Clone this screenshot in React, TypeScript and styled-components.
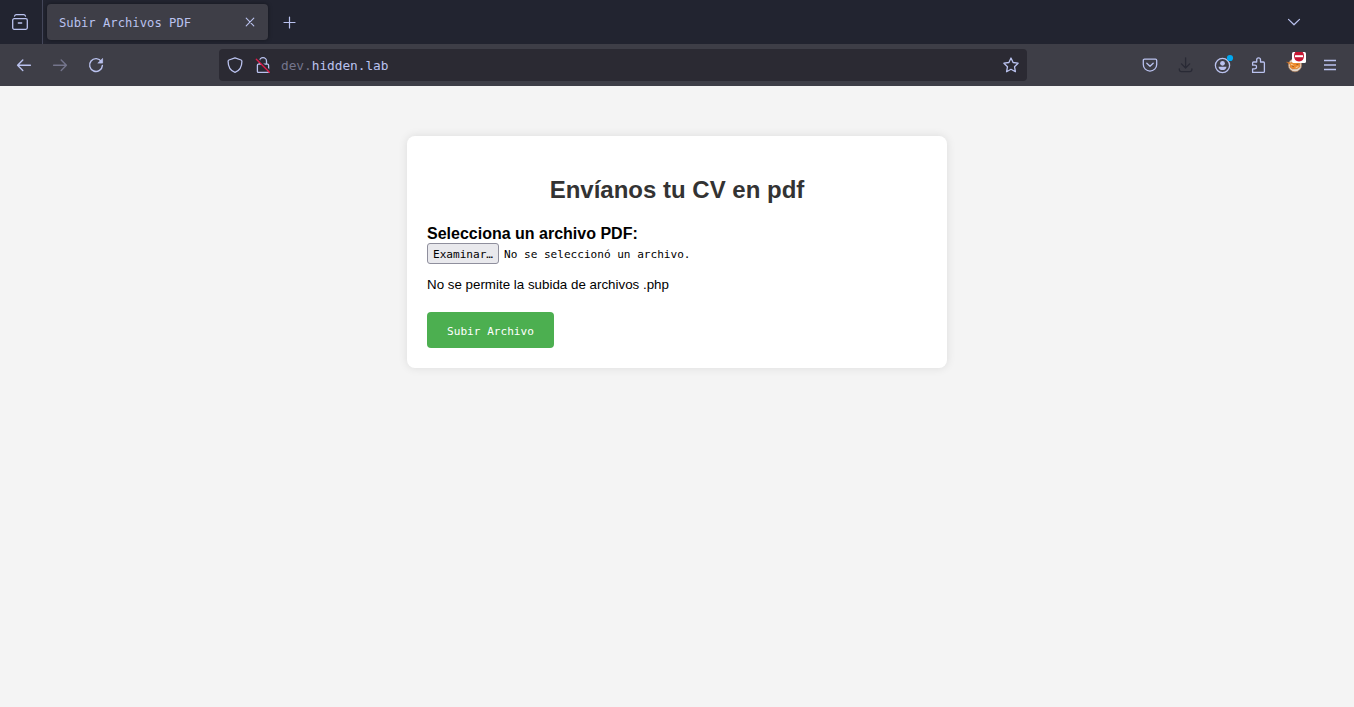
import React from 'react';
import styled, { createGlobalStyle } from 'styled-components';

const mono = `'DejaVu Sans Mono', monospace`;

const GlobalStyle = createGlobalStyle`
  * { box-sizing: border-box; }
  body { margin: 0; background: #f4f4f4; font-family: 'Liberation Sans', Arial, sans-serif; }
`;

const Window = styled.div`
  display: flex;
  flex-direction: column;
  height: 707px;
  overflow: hidden;
`;

const TabStrip = styled.header`
  display: flex;
  align-items: center;
  flex: 0 0 44px;
  background: #222430;
  color: #bac2ef;
`;

const TabOverview = styled.div`
  display: flex;
  align-items: center;
  width: 43px;
  height: 44px;
  padding-left: 12px;
  border-right: 1px solid #44475a;
`;

const Tab = styled.div`
  display: flex;
  align-items: center;
  justify-content: space-between;
  width: 221px;
  height: 36px;
  margin: 0 13px 0 4px;
  padding: 0 10px 0 12px;
  border-radius: 4px;
  background: #3e3e47;
  box-shadow: 0 0 4px rgba(0, 0, 0, 0.4);
`;

const TabTitle = styled.span`
  padding-top: 2px;
  font: 12.2px/16px ${mono};
  white-space: nowrap;
`;

const TabsMenu = styled.div`
  display: flex;
  margin: 0 52px 0 auto;
`;

const Toolbar = styled.nav`
  display: flex;
  align-items: center;
  flex: 0 0 42px;
  padding: 0 16px;
  background: #3e3e47;
  color: #bac2ef;
`;

const IconGroup = styled.div<{ $gap: number }>`
  display: flex;
  align-items: center;
  gap: ${(p) => p.$gap}px;
`;

const AddressBar = styled.div`
  display: flex;
  align-items: center;
  width: 808px;
  height: 32px;
  margin: 0 auto 0 115px;
  padding: 0 8px;
  border-radius: 4px;
  background: #2b2a33;
`;

const Address = styled.span`
  flex: 1;
  margin-left: 10px;
  padding-top: 2px;
  font: 12.8px/18px ${mono};
  letter-spacing: -0.03px;
`;

const Dim = styled.span`
  color: #74758c;
`;

const Glyph = styled.svg<{ $color?: string }>`
  display: block;
  flex: none;
  overflow: visible;
  fill: none;
  stroke: currentColor;
  stroke-width: 1.3;
  stroke-linecap: round;
  stroke-linejoin: round;
  color: ${(p) => p.$color ?? 'inherit'};
`;

const Page = styled.main`
  flex: 1;
  padding-top: 50px;
  background: #f4f4f4;
`;

const Card = styled.form`
  display: flex;
  flex-direction: column;
  align-items: flex-start;
  width: 540px;
  height: 232px;
  margin: 0 auto;
  padding: 20px;
  border-radius: 8px;
  background: #fff;
  box-shadow: 0 0 10px rgba(0, 0, 0, 0.1);
`;

const Heading = styled.h2`
  align-self: stretch;
  margin: 20px 0 22px;
  color: #333;
  font-size: 24px;
  line-height: 27px;
  text-align: center;
`;

const Label = styled.label`
  font-size: 16px;
  font-weight: bold;
  line-height: 18px;
`;

const FileRow = styled.div`
  display: flex;
  align-items: center;
  gap: 5px;
  height: 21px;
  font: 11.1px/14px ${mono};
`;

const FileName = styled.span`
  padding-top: 2px;
  letter-spacing: -0.02px;
`;

const BrowseButton = styled.button`
  width: 72px;
  height: 21px;
  padding: 3px 0 0;
  border: 1px solid #8f8f9d;
  border-radius: 3px;
  background: #e9e9ed;
  color: #000;
  font: 11.1px/16px ${mono};
  letter-spacing: -0.02px;
`;

const Note = styled.p`
  margin: 13px 0 20px;
  font-size: 13.33px;
  line-height: 15px;
  letter-spacing: 0.01px;
`;

const SubmitButton = styled.button`
  width: 127px;
  height: 36px;
  padding: 3px 0 0;
  border: 0;
  border-radius: 4px;
  background: #4caf50;
  color: #fff;
  font: 11.1px/15px ${mono};
`;

type IconProps = { children: React.ReactNode; color?: string };

const Icon = ({ children, color }: IconProps) => (
  <Glyph width="16" height="16" viewBox="0 0 16 16" $color={color} aria-hidden="true">
    {children}
  </Glyph>
);

const App = () => (
  <Window>
    <GlobalStyle />
    <TabStrip>
      <TabOverview>
        <Icon>
          <rect x=".7" y="4.7" width="14.6" height="10.6" rx="1.5" />
          <path d="M2.5 2.1Q3 .7 4.3.7h7.4q1.3 0 1.8 1.4M6.3 9h3.4" />
        </Icon>
      </TabOverview>
      <Tab>
        <TabTitle>Subir Archivos PDF</TabTitle>
        <Icon>
          <path strokeWidth="1.1" d="m4.2 4.2 7.6 7.6m0-7.6-7.6 7.6" />
        </Icon>
      </Tab>
      <Icon>
        <path strokeWidth="1.2" d="M8.5 3v11M3 8.5h11" />
      </Icon>
      <TabsMenu>
        <Icon>
          <path strokeWidth="1.2" d="m2.5 5.4 5.5 5.4 5.5-5.4" />
        </Icon>
      </TabsMenu>
    </TabStrip>
    <Toolbar>
      <IconGroup $gap={20}>
        <Icon>
          <path strokeWidth="1.4" d="M14.4 8.3H1.6M6.8 3.1 1.6 8.3l5.2 5.2" />
        </Icon>
        <Icon color="#74758c">
          <path strokeWidth="1.4" d="M1.6 8.3h12.8M9.2 3.1l5.2 5.2-5.2 5.2" />
        </Icon>
        <Icon>
          <path strokeWidth="1.4" d="M13.4 4.6A6.4 6.4 0 1 0 14.4 8.4" />
          <path d="M14.6 1.8v4.3h-4.4Z" fill="currentColor" strokeWidth=".7" />
        </Icon>
      </IconGroup>
      <AddressBar>
        <IconGroup $gap={12}>
          <Icon>
            <path d="M8 .8 14.1 3q.8.3.8 1.2c0 5.4-2.3 9.5-6.9 11.1C3.4 13.7 1.1 9.6 1.1 4.2q0-.9.8-1.2Z" />
          </Icon>
          <Icon>
            <path d="M4.5 7V4.1a3.5 3.5 0 0 1 7 0V7M3.4 7.2h9.2q1 0 1 1v6.2q0 1-1 1H3.4q-1 0-1-1V8.2q0-1 1-1Z" />
            <path stroke="#2b2a33" strokeWidth="2" d="M2 1.5 15.4 14.8" />
            <path stroke="#e31b4b" strokeWidth="1.3" d="M1.3 2.2 14.4 15.3" />
          </Icon>
        </IconGroup>
        <Address>
          <Dim>dev.</Dim>hidden.lab
        </Address>
        <Icon>
          <path d="m8 1 2.1 4.5 5 .7-3.6 3.5.9 5L8 12.3l-4.4 2.4.9-5L.9 6.2l5-.7Z" />
        </Icon>
      </AddressBar>
      <IconGroup $gap={20}>
        <Icon>
          <path d="M2.5 2.2h11q1.2 0 1.2 1.2v4a6.7 6.7 0 0 1-13.4 0v-4q0-1.2 1.2-1.2ZM4.8 6.2 8 9.3l3.2-3.1" />
        </Icon>
        <Icon color="#292a35">
          <path d="M7.6.8v10M3.5 6.9l4.1 4.1 4.1-4.1M1.3 11.8v1q0 1.8 1.8 1.8h9q1.8 0 1.8-1.8v-1" />
        </Icon>
        <Icon>
          <circle cx="8.5" cy="8.5" r="7.1" />
          <circle cx="8.5" cy="6.3" r="2.4" fill="currentColor" stroke="none" />
          <path fill="currentColor" stroke="none" d="M4.5 9.7h8q-.5 3.4-4 3.4t-4-3.4Z" />
          <circle cx="16" cy="1" r="3.1" fill="#00a8f0" stroke="none" />
        </Icon>
        <Icon>
          <path d="M2.6 15.4h10.8q1 0 1-1V6q0-1-1-1h-2.9V2.7a1.9 1.9 0 0 0-3.8 0V5H3.6q-1 0-1 1v2.2h2.2a1.8 1.8 0 0 1 0 3.6H2.6Z" />
        </Icon>
        <Icon>
          <circle cx="9" cy="8.2" r="6.6" fill="#e4d8cc" stroke="#a87855" strokeWidth=".7" />
          <path
            fill="#ee8b2d"
            stroke="#c66a22"
            strokeWidth=".4"
            d="m.8 5.2 4 .5 3-1.4 6.2 1-.2 4.6-2.7 1.9-4.8.3-2.4-2.2.4-2.2Z"
          />
          <path stroke="#fff0cf" strokeWidth=".7" d="m5 7.2 2 .8M10 10.6l2-.8" />
          <path stroke="#754526" strokeWidth=".7" d="m6.5 9.2 1 .4M10.8 7.5l1.2-.2" />
          <rect x="6" y="-5" width="14" height="11" rx="1.5" fill="#fff" stroke="none" />
          <path fill="#c51632" stroke="none" d="M9.3-5h7.4Q18-3.2 18-1.2 18 4.4 13 4.4T8-1.2Q8-3.2 9.3-5Z" />
          <path stroke="#fff" strokeWidth="2" strokeLinecap="butt" d="M9 -.8h8" />
        </Icon>
        <Icon>
          <path strokeLinecap="butt" d="M2 3.5h12M2 8h12M2 12.5h12" />
        </Icon>
      </IconGroup>
    </Toolbar>
    <Page>
      <Card onSubmit={(e) => e.preventDefault()}>
        <Heading>Envíanos tu CV en pdf</Heading>
        <Label>Selecciona un archivo PDF:</Label>
        <FileRow>
          <BrowseButton type="button">Examinar…</BrowseButton>
          <FileName>No se seleccionó un archivo.</FileName>
        </FileRow>
        <Note>No se permite la subida de archivos .php</Note>
        <SubmitButton type="submit">Subir Archivo</SubmitButton>
      </Card>
    </Page>
  </Window>
);

export default App;
